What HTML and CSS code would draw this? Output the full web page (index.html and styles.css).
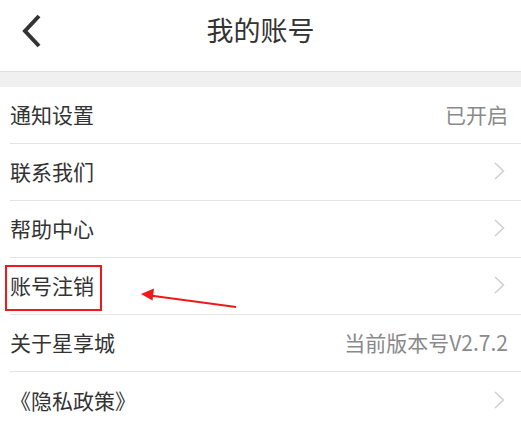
FILE: index.html
```html
<!DOCTYPE html>
<html lang="zh-CN">
<head>
<meta charset="utf-8">
<title>我的账号</title>
<link rel="stylesheet" href="styles.css">
</head>
<body>
<div class="page">
  <header class="topbar">
    <svg class="back" width="24" height="34" viewBox="0 0 24 34">
      <polyline points="19,2 5,17 19,32" fill="none" stroke="#333" stroke-width="4" stroke-linejoin="miter"/>
    </svg>
    <h1 class="title">我的账号</h1>
  </header>
  <div class="band"></div>
  <ul class="list">
    <li class="row"><span class="label">通知设置</span><span class="value">已开启</span></li>
    <li class="row"><span class="label">联系我们</span><svg class="chev" width="11" height="18" viewBox="0 0 11 18"><polyline points="1,1 9.5,9 1,17" fill="none" stroke="#cfcfcf" stroke-width="1.5"/></svg></li>
    <li class="row"><span class="label">帮助中心</span><svg class="chev" width="11" height="18" viewBox="0 0 11 18"><polyline points="1,1 9.5,9 1,17" fill="none" stroke="#cfcfcf" stroke-width="1.5"/></svg></li>
    <li class="row"><span class="label">账号注销</span><svg class="chev" width="11" height="18" viewBox="0 0 11 18"><polyline points="1,1 9.5,9 1,17" fill="none" stroke="#cfcfcf" stroke-width="1.5"/></svg></li>
    <li class="row"><span class="label">关于星享城</span><span class="value">当前版本号V2.7.2</span></li>
    <li class="row"><span class="label">《隐私政策》</span><svg class="chev" width="11" height="18" viewBox="0 0 11 18"><polyline points="1,1 9.5,9 1,17" fill="none" stroke="#cfcfcf" stroke-width="1.5"/></svg></li>
  </ul>
  <svg class="annot" width="521" height="430" viewBox="0 0 521 430">
    <rect x="6" y="266" width="95" height="44" fill="none" stroke="#f01818" stroke-width="2"/>
    <line x1="236" y1="307" x2="150" y2="295.5" stroke="#f01818" stroke-width="2"/>
    <polygon points="141,294 154,288.5 152.5,300.5" fill="#f01818"/>
  </svg>
</div>
</body>
</html>
```

FILE: styles.css
```css
* { box-sizing: border-box; }
html, body {
  margin: 0;
  padding: 0;
  background: #fff;
}
body {
  font-family: "Noto Sans CJK SC", "Noto Sans", sans-serif;
  color: #333;
}
.page {
  position: relative;
  width: 521px;
  height: 430px;
  overflow: hidden;
}
.topbar {
  height: 72px;
  border-bottom: 1px solid #e2dcdc;
  display: flex;
  align-items: center;
  justify-content: center;
  position: relative;
  padding-bottom: 12px;
}
.back {
  position: absolute;
  left: 20px;
  top: 14px;
}
.title {
  margin: 0;
  font-size: 27px;
  font-weight: normal;
  color: #333;
  line-height: 1;
}
.band {
  height: 15px;
  background: #f1f0f0;
}
.list {
  list-style: none;
  margin: 0;
  padding: 0;
}
.row {
  height: 57px;
  margin-left: 10px;
  border-bottom: 1px solid #e4e4e4;
  display: flex;
  align-items: center;
  justify-content: space-between;
  padding-right: 13px;
  padding-bottom: 2px;
}
.row:last-child { border-bottom: none; }
.label {
  font-size: 21px;
  color: #333;
}
.value {
  font-size: 21px;
  color: #8a8a8a;
}
.chev {
  margin-right: 3px;
}
.annot {
  position: absolute;
  left: 0;
  top: 0;
  pointer-events: none;
}
```
